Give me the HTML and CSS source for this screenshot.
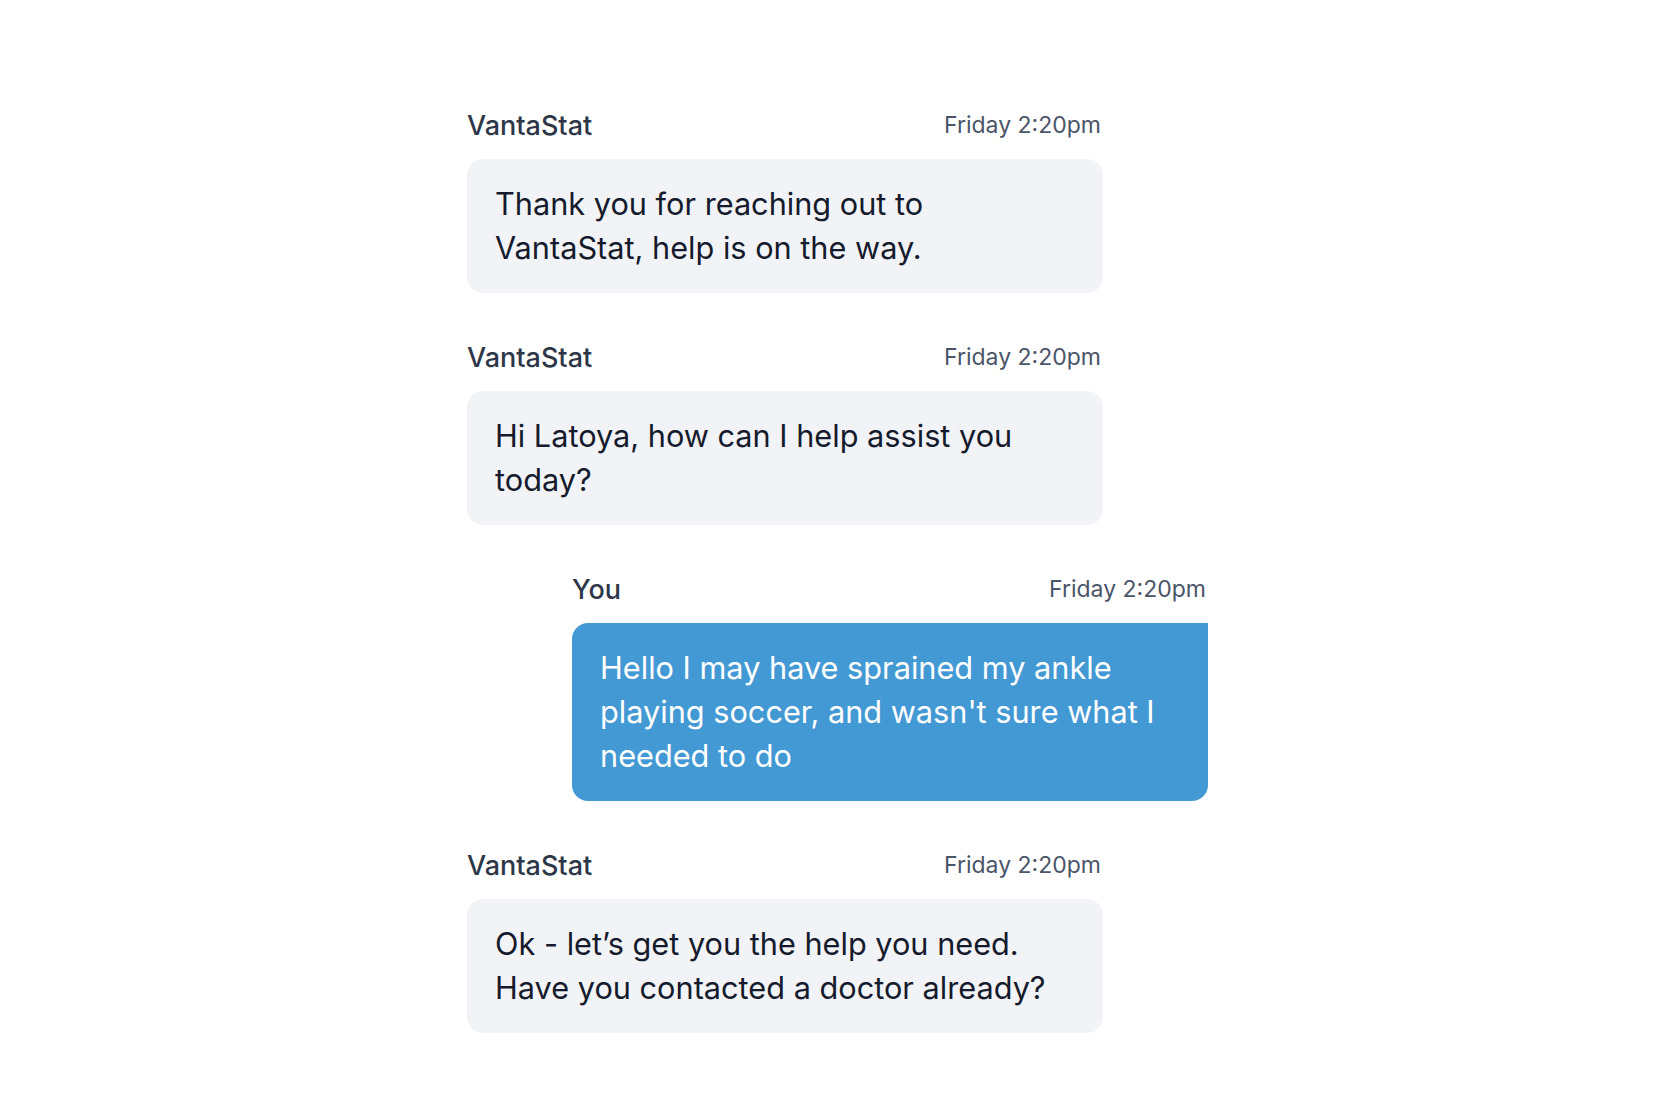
FILE: index.html
```html
<!DOCTYPE html>
<html lang="en">
<head>
<meta charset="utf-8">
<title>Chat</title>
<link rel="stylesheet" href="styles.css">
</head>
<body>
<main class="chat">
  <section class="msg msg--agent">
    <header class="msg-head"><span class="msg-name">VantaStat</span><span class="msg-time">Friday 2:20pm</span></header>
    <div class="bubble">Thank you for reaching out to VantaStat, help is on the way.</div>
  </section>
  <section class="msg msg--agent">
    <header class="msg-head"><span class="msg-name">VantaStat</span><span class="msg-time">Friday 2:20pm</span></header>
    <div class="bubble">Hi Latoya, how can I help assist you today?</div>
  </section>
  <section class="msg msg--self">
    <header class="msg-head"><span class="msg-name">You</span><span class="msg-time">Friday 2:20pm</span></header>
    <div class="bubble bubble--self">Hello I may have sprained my ankle playing soccer, and wasn't sure what I needed to do</div>
  </section>
  <section class="msg msg--agent">
    <header class="msg-head"><span class="msg-name">VantaStat</span><span class="msg-time">Friday 2:20pm</span></header>
    <div class="bubble">Ok - let’s get you the help you need. Have you contacted a doctor already?</div>
  </section>
</main>
</body>
</html>
```
FILE: styles.css
```css
* { box-sizing: border-box; }
html, body { margin: 0; padding: 0; background: #ffffff; }
body {
  font-family: Inter, "Noto Sans", "Liberation Sans", sans-serif;
  color: #111827;
}
.chat {
  width: 746px;
  margin: 0 auto;
  padding: 110px 5px 60px 0;
  display: flex;
  flex-direction: column;
  gap: 49px;
}
.msg {
  width: 636px;
  display: flex;
  flex-direction: column;
  gap: 17px;
}
.msg--self { margin-left: 105px; }
.msg-head {
  display: flex;
  justify-content: space-between;
  align-items: center;
  height: 32px;
  line-height: 32px;
  padding-right: 2px;
}
.msg-name {
  font-size: 27px;
  font-weight: 500;
  color: #2d3748;
}
.msg-time {
  font-size: 23px;
  font-weight: 400;
  color: #4a5568;
  padding-bottom: 2px;
}
.bubble {
  background: #f2f3f7;
  border-radius: 16px;
  padding: 23px 44px 23px 28px;
  font-size: 30.7px;
  line-height: 44px;
  color: #151b2c;
}
.bubble--self {
  background: #4399d3;
  color: #ffffff;
  border-top-right-radius: 0;
}
```
